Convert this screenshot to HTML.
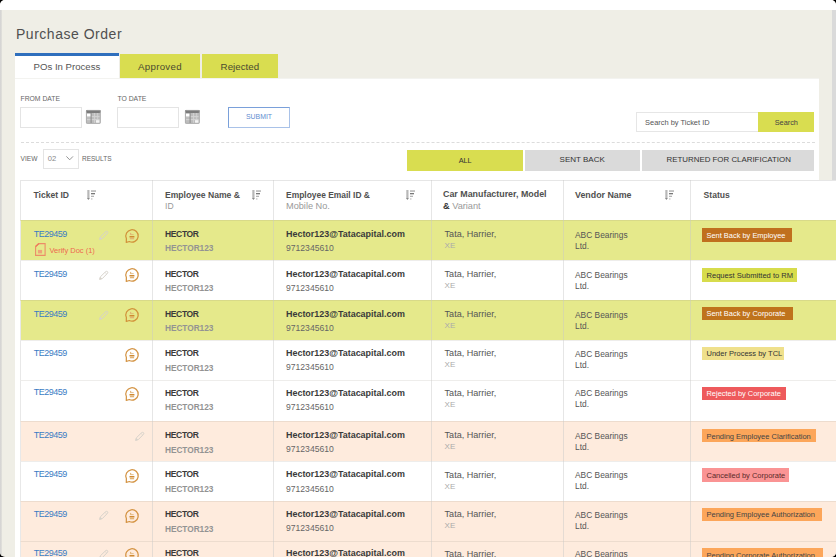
<!DOCTYPE html>
<html><head><meta charset="utf-8">
<style>
html,body{margin:0;padding:0;}
body{width:836px;height:557px;overflow:hidden;background:#000;position:relative;font-family:"Liberation Sans",sans-serif;}
#win{position:absolute;left:0;top:0;width:836px;height:557px;border-radius:5px;overflow:hidden;background:#efeee6;}
.t{position:absolute;white-space:nowrap;line-height:1;}
.b{position:absolute;box-sizing:border-box;}
svg{position:absolute;overflow:visible;}
</style></head><body><div id="win">
<div class="b" style="left:0px;top:0px;width:836px;height:10px;background:#fff;"></div>
<div class="b" style="left:0px;top:10px;width:2px;height:547px;background:linear-gradient(90deg,#d2d2d2,#e2e1dc);"></div>
<div class="b" style="left:832px;top:10px;width:4px;height:547px;background:#dadada;"></div>
<div class="t" style="left:16px;top:27.15px;font-size:14px;color:#505050;font-weight:400;letter-spacing:0.52px;">Purchase Order</div>
<div class="b" style="left:15px;top:53px;width:104px;height:25px;background:#fff;border-top:3px solid #2f6fbd;"></div>
<div class="b" style="left:120px;top:54px;width:80px;height:24px;background:#d9dd50;"></div>
<div class="b" style="left:202px;top:54px;width:76px;height:24px;background:#d9dd50;"></div>
<div class="t" style="left:33.6px;top:61.87px;font-size:9.6px;color:#555;font-weight:400;">POs In Process</div>
<div class="t" style="left:138px;top:61.69px;font-size:9.7px;color:#4a4a30;font-weight:400;letter-spacing:0.3px;">Approved</div>
<div class="t" style="left:220.6px;top:61.69px;font-size:9.7px;color:#4a4a30;font-weight:400;letter-spacing:0.05px;">Rejected</div>
<div class="b" style="left:15px;top:78px;width:804px;height:479px;background:#fff;border-top:1px solid #f3f3f0;"></div>
<div class="t" style="left:20.5px;top:95.94px;font-size:6.8px;color:#666;font-weight:400;">FROM DATE</div>
<div class="t" style="left:117.4px;top:95.90px;font-size:6.85px;color:#666;font-weight:400;">TO DATE</div>
<div class="b" style="left:20px;top:107px;width:62px;height:21px;border:1px solid #e4e4e4;"></div>
<div class="b" style="left:117px;top:107px;width:62px;height:21px;border:1px solid #e4e4e4;"></div>
<svg style="left:86px;top:110px" width="15" height="14" viewBox="0 0 15 14"><rect x="0" y="0" width="14.7" height="13.8" rx="1" fill="#bdbdbd"/><rect x="0" y="0" width="14.7" height="3" rx="1" fill="#7c7c7c"/><rect x="1" y="6.3" width="12.7" height="0.8" fill="#dcdcdc"/><rect x="1" y="9.3" width="12.7" height="0.8" fill="#dcdcdc"/><rect x="8" y="3" width="0.8" height="10" fill="#d5d5d5"/><rect x="11.3" y="3" width="0.8" height="10" fill="#d5d5d5"/><rect x="4.6" y="3" width="1" height="10" fill="#8a8a8a"/><rect x="1" y="3.8" width="3.4" height="2.4" fill="#fff"/><rect x="10" y="10.2" width="3.6" height="2.6" fill="#f4f4f4"/><rect x="0.4" y="0.4" width="13.9" height="13" rx="1" fill="none" stroke="#a9a9a9" stroke-width="0.8"/></svg>
<svg style="left:185px;top:110px" width="15" height="14" viewBox="0 0 15 14"><rect x="0" y="0" width="14.7" height="13.8" rx="1" fill="#bdbdbd"/><rect x="0" y="0" width="14.7" height="3" rx="1" fill="#7c7c7c"/><rect x="1" y="6.3" width="12.7" height="0.8" fill="#dcdcdc"/><rect x="1" y="9.3" width="12.7" height="0.8" fill="#dcdcdc"/><rect x="8" y="3" width="0.8" height="10" fill="#d5d5d5"/><rect x="11.3" y="3" width="0.8" height="10" fill="#d5d5d5"/><rect x="4.6" y="3" width="1" height="10" fill="#8a8a8a"/><rect x="1" y="3.8" width="3.4" height="2.4" fill="#fff"/><rect x="10" y="10.2" width="3.6" height="2.6" fill="#f4f4f4"/><rect x="0.4" y="0.4" width="13.9" height="13" rx="1" fill="none" stroke="#a9a9a9" stroke-width="0.8"/></svg>
<div class="b" style="left:228px;top:107px;width:62px;height:21px;border:1px solid #a9c2e8;border-top:1.6px solid #7aa0da;border-left:1.6px solid #7aa0da;"></div>
<div class="t" style="left:246px;top:114.46px;font-size:6.9px;color:#5f8dd0;font-weight:400;">SUBMIT</div>
<div class="b" style="left:21px;top:142px;width:794px;height:1px;border-top:1px dashed #dcdcdc;"></div>
<div class="b" style="left:636px;top:112px;width:122px;height:20px;border:1px solid #e6e6e6;border-right:none;"></div>
<div class="b" style="left:758px;top:112px;width:56px;height:20px;background:#d9dd50;"></div>
<div class="t" style="left:645.1px;top:119.09px;font-size:7.45px;color:#555;font-weight:400;">Search by Ticket ID</div>
<div class="t" style="left:774.7px;top:118.78px;font-size:7.35px;color:#444;font-weight:400;">Search</div>
<div class="t" style="left:20.5px;top:155.91px;font-size:6.6px;color:#666;font-weight:400;">VIEW</div>
<div class="b" style="left:43px;top:149px;width:36px;height:19.5px;border:1px solid #e4e4e4;"></div>
<div class="t" style="left:47.8px;top:155.17px;font-size:7.6px;color:#888;font-weight:400;letter-spacing:-0.1px;">02</div>
<svg style="left:66.2px;top:156.2px" width="8" height="5" viewBox="0 0 8 5"><path d="M0.4 0.4 L3.7 3.8 L7 0.4" fill="none" stroke="#888" stroke-width="0.9"/></svg>
<div class="t" style="left:82px;top:155.50px;font-size:6.5px;color:#666;font-weight:400;">RESULTS</div>
<div class="b" style="left:407px;top:150px;width:116px;height:21px;background:#d9dd50;"></div>
<div class="b" style="left:525px;top:150px;width:115px;height:21px;background:#dadada;"></div>
<div class="b" style="left:642px;top:150px;width:172px;height:21px;background:#dadada;"></div>
<div class="t" style="left:458.7px;top:156.62px;font-size:7.3px;color:#333;font-weight:400;">ALL</div>
<div class="t" style="left:559.6px;top:156.03px;font-size:8px;color:#333;font-weight:400;">SENT BACK</div>
<div class="t" style="left:666.5px;top:156.11px;font-size:7.9px;color:#333;font-weight:400;">RETURNED FOR CLARIFICATION</div>
<div class="b" style="left:20px;top:180px;width:816px;height:40px;background:#fff;border-top:1px solid #e6e6e6;border-left:1px solid #e6e6e6;"></div>
<div class="b" style="left:20px;top:220px;width:816px;height:40px;background:#e5e98b;border-top:1px solid rgba(150,140,130,0.16);border-left:1px solid #e8e8e8;"></div>
<div class="b" style="left:20px;top:260px;width:816px;height:40px;background:#fff;border-top:1px solid rgba(150,140,130,0.16);border-left:1px solid #e8e8e8;"></div>
<div class="b" style="left:20px;top:300px;width:816px;height:40px;background:#e5e98b;border-top:1px solid rgba(150,140,130,0.16);border-left:1px solid #e8e8e8;"></div>
<div class="b" style="left:20px;top:340px;width:816px;height:40px;background:#fff;border-top:1px solid rgba(150,140,130,0.16);border-left:1px solid #e8e8e8;"></div>
<div class="b" style="left:20px;top:380px;width:816px;height:41px;background:#fff;border-top:1px solid rgba(150,140,130,0.16);border-left:1px solid #e8e8e8;"></div>
<div class="b" style="left:20px;top:421px;width:816px;height:40px;background:#feebdd;border-top:1px solid rgba(150,140,130,0.16);border-left:1px solid #e8e8e8;"></div>
<div class="b" style="left:20px;top:461px;width:816px;height:40px;background:#fff;border-top:1px solid rgba(150,140,130,0.16);border-left:1px solid #e8e8e8;"></div>
<div class="b" style="left:20px;top:501px;width:816px;height:40px;background:#feebdd;border-top:1px solid rgba(150,140,130,0.16);border-left:1px solid #e8e8e8;"></div>
<div class="b" style="left:20px;top:541px;width:816px;height:40px;background:#feebdd;border-top:1px solid rgba(150,140,130,0.16);border-left:1px solid #e8e8e8;"></div>
<div class="b" style="left:152px;top:180px;width:1px;height:377px;background:rgba(200,200,200,0.45);"></div>
<div class="b" style="left:273px;top:180px;width:1px;height:377px;background:rgba(200,200,200,0.45);"></div>
<div class="b" style="left:431px;top:180px;width:1px;height:377px;background:rgba(200,200,200,0.45);"></div>
<div class="b" style="left:563px;top:180px;width:1px;height:377px;background:rgba(200,200,200,0.45);"></div>
<div class="b" style="left:690px;top:180px;width:1px;height:377px;background:rgba(200,200,200,0.45);"></div>
<div class="t" style="left:33.5px;top:190.76px;font-size:8.55px;color:#505050;font-weight:700;">Ticket ID</div>
<svg style="left:87px;top:190px" width="10" height="11" viewBox="0 0 10 11"><rect x="0.3" y="0" width="2.2" height="8.5" fill="#b8b8b8"/><path d="M0 8 L1.4 10 L2.8 8 Z" fill="#8a8a8a"/><rect x="4" y="0.4" width="5" height="1.3" fill="#a8a8a8"/><rect x="4" y="3.1" width="4" height="1.2" fill="#6a6a6a"/><rect x="4" y="5.7" width="3" height="1.3" fill="#b5b5b5"/><rect x="4" y="8.3" width="1.5" height="1.3" fill="#c5c5c5"/></svg>
<div class="t" style="left:165px;top:190.72px;font-size:8.6px;color:#505050;font-weight:700;">Employee Name &amp;</div>
<div class="t" style="left:165px;top:202.22px;font-size:8.6px;color:#999;font-weight:400;">ID</div>
<svg style="left:252px;top:190px" width="10" height="11" viewBox="0 0 10 11"><rect x="0.3" y="0" width="2.2" height="8.5" fill="#b8b8b8"/><path d="M0 8 L1.4 10 L2.8 8 Z" fill="#8a8a8a"/><rect x="4" y="0.4" width="5" height="1.3" fill="#a8a8a8"/><rect x="4" y="3.1" width="4" height="1.2" fill="#6a6a6a"/><rect x="4" y="5.7" width="3" height="1.3" fill="#b5b5b5"/><rect x="4" y="8.3" width="1.5" height="1.3" fill="#c5c5c5"/></svg>
<div class="t" style="left:286px;top:190.85px;font-size:8.45px;color:#505050;font-weight:700;">Employee Email ID &amp;</div>
<div class="t" style="left:286px;top:201.51px;font-size:9.2px;color:#999;font-weight:400;">Mobile No.</div>
<svg style="left:406px;top:190px" width="10" height="11" viewBox="0 0 10 11"><rect x="0.3" y="0" width="2.2" height="8.5" fill="#b8b8b8"/><path d="M0 8 L1.4 10 L2.8 8 Z" fill="#8a8a8a"/><rect x="4" y="0.4" width="5" height="1.3" fill="#a8a8a8"/><rect x="4" y="3.1" width="4" height="1.2" fill="#6a6a6a"/><rect x="4" y="5.7" width="3" height="1.3" fill="#b5b5b5"/><rect x="4" y="8.3" width="1.5" height="1.3" fill="#c5c5c5"/></svg>
<div class="t" style="left:443px;top:190.47px;font-size:8.9px;color:#505050;font-weight:700;">Car Manufacturer, Model</div>
<div class="t" style="left:443px;top:201.51px;font-size:9.2px;color:#333;font-weight:700;">&amp; <span style="color:#999;font-weight:400">Variant</span></div>
<div class="t" style="left:575px;top:190.50px;font-size:8.86px;color:#505050;font-weight:700;">Vendor Name</div>
<svg style="left:665px;top:190px" width="10" height="11" viewBox="0 0 10 11"><rect x="0.3" y="0" width="2.2" height="8.5" fill="#b8b8b8"/><path d="M0 8 L1.4 10 L2.8 8 Z" fill="#8a8a8a"/><rect x="4" y="0.4" width="5" height="1.3" fill="#a8a8a8"/><rect x="4" y="3.1" width="4" height="1.2" fill="#6a6a6a"/><rect x="4" y="5.7" width="3" height="1.3" fill="#b5b5b5"/><rect x="4" y="8.3" width="1.5" height="1.3" fill="#c5c5c5"/></svg>
<div class="t" style="left:703.6px;top:190.72px;font-size:8.6px;color:#505050;font-weight:700;">Status</div>
<div class="t" style="left:33.8px;top:229.68px;font-size:9px;color:#3a7cc4;font-weight:400;letter-spacing:-0.5px;">TE29459</div>
<svg style="left:35px;top:243.3px" width="11" height="13" viewBox="0 0 11 13"><path d="M0.6 3.6 L3.9 0.6 H10.1 V12.4 H0.6 Z" fill="none" stroke="#ec8c68" stroke-width="1.1"/><path d="M0.6 3.6 L3.9 0.6" stroke="#ee7a5a" stroke-width="1.4"/><rect x="2.9" y="6.9" width="4.2" height="3.5" fill="#eea478"/></svg>
<div class="t" style="left:49.4px;top:246.65px;font-size:7.5px;color:#ee6a50;font-weight:400;">Verify Doc (1)</div>
<svg style="left:99px;top:229.6px" width="10" height="10" viewBox="0 0 10 10"><path d="M0.6 9.4 L1.3 6.9 L6.5 1.8 Q7.5 0.9 8.5 1.7 Q9.2 2.6 8.3 3.5 L3.2 8.7 Z" fill="none" stroke="#d4d0c8" stroke-width="0.95"/><path d="M0.6 9.4 L1.3 6.9 L3.2 8.7 Z" fill="#d8d4cc"/><path d="M6.0 2.4 L7.8 4.1" stroke="#d8d4cc" stroke-width="0.7"/></svg>
<svg style="left:123.8px;top:227.79999999999998px" width="16" height="16" viewBox="0 0 16 16"><path d="M2.38 10.52 L2.3 14.4 L5.38 13.52 A6.2 6.2 0 1 0 2.38 10.52 Z" fill="none" stroke="#cf8a32" stroke-width="1.25" stroke-linejoin="round" opacity="0.9"/><rect x="6.1" y="4.9" width="1.1" height="1.6" fill="#dfb070"/><rect x="6.1" y="6.3" width="3.6" height="0.8" fill="#dfb070"/><rect x="5.5" y="8.0" width="4.9" height="1.5" fill="#cf8a32"/><rect x="5.9" y="10.0" width="4.2" height="1.3" fill="#e2b474"/></svg>
<div class="t" style="left:165px;top:229.80px;font-size:8.5px;color:#3a3a3a;font-weight:700;letter-spacing:-0.35px;">HECTOR</div>
<div class="t" style="left:165px;top:244.37px;font-size:8.3px;color:#939393;font-weight:700;letter-spacing:-0.05px;">HECTOR123</div>
<div class="t" style="left:286px;top:229.82px;font-size:8.95px;color:#3a3a3a;font-weight:700;">Hector123@Tatacapital.com</div>
<div class="t" style="left:286px;top:244.02px;font-size:8.6px;color:#666;font-weight:400;">9712345610</div>
<div class="t" style="left:444.6px;top:230.14px;font-size:9.05px;color:#555;font-weight:400;">Tata, Harrier,</div>
<div class="t" style="left:444.6px;top:242.03px;font-size:8px;color:#aaa;font-weight:400;">XE</div>
<div class="t" style="left:575px;top:230.69px;font-size:8.4px;color:#555;font-weight:400;">ABC Bearings</div>
<div class="t" style="left:575px;top:241.69px;font-size:8.4px;color:#555;font-weight:400;">Ltd.</div>
<div class="b" style="left:702px;top:228.2px;width:89.5px;height:13.400000000000006px;background:#c0701e;"></div>
<div class="t" style="left:706.5px;top:231.69px;font-size:7.45px;color:#fff;font-weight:400;">Sent Back by Employee</div>
<div class="t" style="left:33.8px;top:269.68px;font-size:9px;color:#3a7cc4;font-weight:400;letter-spacing:-0.5px;">TE29459</div>
<svg style="left:99px;top:269.6px" width="10" height="10" viewBox="0 0 10 10"><path d="M0.6 9.4 L1.3 6.9 L6.5 1.8 Q7.5 0.9 8.5 1.7 Q9.2 2.6 8.3 3.5 L3.2 8.7 Z" fill="none" stroke="#d4d0c8" stroke-width="0.95"/><path d="M0.6 9.4 L1.3 6.9 L3.2 8.7 Z" fill="#d8d4cc"/><path d="M6.0 2.4 L7.8 4.1" stroke="#d8d4cc" stroke-width="0.7"/></svg>
<svg style="left:123.8px;top:267.2px" width="16" height="16" viewBox="0 0 16 16"><path d="M2.38 10.52 L2.3 14.4 L5.38 13.52 A6.2 6.2 0 1 0 2.38 10.52 Z" fill="none" stroke="#cf8a32" stroke-width="1.25" stroke-linejoin="round" opacity="0.9"/><rect x="6.1" y="4.9" width="1.1" height="1.6" fill="#dfb070"/><rect x="6.1" y="6.3" width="3.6" height="0.8" fill="#dfb070"/><rect x="5.5" y="8.0" width="4.9" height="1.5" fill="#cf8a32"/><rect x="5.9" y="10.0" width="4.2" height="1.3" fill="#e2b474"/></svg>
<div class="t" style="left:165px;top:269.80px;font-size:8.5px;color:#3a3a3a;font-weight:700;letter-spacing:-0.35px;">HECTOR</div>
<div class="t" style="left:165px;top:284.37px;font-size:8.3px;color:#939393;font-weight:700;letter-spacing:-0.05px;">HECTOR123</div>
<div class="t" style="left:286px;top:269.82px;font-size:8.95px;color:#3a3a3a;font-weight:700;">Hector123@Tatacapital.com</div>
<div class="t" style="left:286px;top:284.02px;font-size:8.6px;color:#666;font-weight:400;">9712345610</div>
<div class="t" style="left:444.6px;top:270.14px;font-size:9.05px;color:#555;font-weight:400;">Tata, Harrier,</div>
<div class="t" style="left:444.6px;top:282.03px;font-size:8px;color:#aaa;font-weight:400;">XE</div>
<div class="t" style="left:575px;top:270.69px;font-size:8.4px;color:#555;font-weight:400;">ABC Bearings</div>
<div class="t" style="left:575px;top:281.69px;font-size:8.4px;color:#555;font-weight:400;">Ltd.</div>
<div class="b" style="left:702px;top:268.4px;width:95px;height:13.399999999999977px;background:#d7dc4c;"></div>
<div class="t" style="left:706.5px;top:271.79px;font-size:7.57px;color:#333;font-weight:400;">Request Submitted to RM</div>
<div class="t" style="left:33.8px;top:309.68px;font-size:9px;color:#3a7cc4;font-weight:400;letter-spacing:-0.5px;">TE29459</div>
<svg style="left:99px;top:309.6px" width="10" height="10" viewBox="0 0 10 10"><path d="M0.6 9.4 L1.3 6.9 L6.5 1.8 Q7.5 0.9 8.5 1.7 Q9.2 2.6 8.3 3.5 L3.2 8.7 Z" fill="none" stroke="#d4d0c8" stroke-width="0.95"/><path d="M0.6 9.4 L1.3 6.9 L3.2 8.7 Z" fill="#d8d4cc"/><path d="M6.0 2.4 L7.8 4.1" stroke="#d8d4cc" stroke-width="0.7"/></svg>
<svg style="left:123.8px;top:307.2px" width="16" height="16" viewBox="0 0 16 16"><path d="M2.38 10.52 L2.3 14.4 L5.38 13.52 A6.2 6.2 0 1 0 2.38 10.52 Z" fill="none" stroke="#cf8a32" stroke-width="1.25" stroke-linejoin="round" opacity="0.9"/><rect x="6.1" y="4.9" width="1.1" height="1.6" fill="#dfb070"/><rect x="6.1" y="6.3" width="3.6" height="0.8" fill="#dfb070"/><rect x="5.5" y="8.0" width="4.9" height="1.5" fill="#cf8a32"/><rect x="5.9" y="10.0" width="4.2" height="1.3" fill="#e2b474"/></svg>
<div class="t" style="left:165px;top:309.80px;font-size:8.5px;color:#3a3a3a;font-weight:700;letter-spacing:-0.35px;">HECTOR</div>
<div class="t" style="left:165px;top:324.37px;font-size:8.3px;color:#939393;font-weight:700;letter-spacing:-0.05px;">HECTOR123</div>
<div class="t" style="left:286px;top:309.82px;font-size:8.95px;color:#3a3a3a;font-weight:700;">Hector123@Tatacapital.com</div>
<div class="t" style="left:286px;top:324.02px;font-size:8.6px;color:#666;font-weight:400;">9712345610</div>
<div class="t" style="left:444.6px;top:310.14px;font-size:9.05px;color:#555;font-weight:400;">Tata, Harrier,</div>
<div class="t" style="left:444.6px;top:322.03px;font-size:8px;color:#aaa;font-weight:400;">XE</div>
<div class="t" style="left:575px;top:310.69px;font-size:8.4px;color:#555;font-weight:400;">ABC Bearings</div>
<div class="t" style="left:575px;top:321.69px;font-size:8.4px;color:#555;font-weight:400;">Ltd.</div>
<div class="b" style="left:702px;top:306.8px;width:90.5px;height:13.399999999999977px;background:#bf731c;"></div>
<div class="t" style="left:706.5px;top:310.29px;font-size:7.45px;color:#fff;font-weight:400;">Sent Back by Corporate</div>
<div class="t" style="left:33.8px;top:348.98px;font-size:9px;color:#3a7cc4;font-weight:400;letter-spacing:-0.5px;">TE29459</div>
<svg style="left:123.8px;top:346.5px" width="16" height="16" viewBox="0 0 16 16"><path d="M2.38 10.52 L2.3 14.4 L5.38 13.52 A6.2 6.2 0 1 0 2.38 10.52 Z" fill="none" stroke="#cf8a32" stroke-width="1.25" stroke-linejoin="round" opacity="0.9"/><rect x="6.1" y="4.9" width="1.1" height="1.6" fill="#dfb070"/><rect x="6.1" y="6.3" width="3.6" height="0.8" fill="#dfb070"/><rect x="5.5" y="8.0" width="4.9" height="1.5" fill="#cf8a32"/><rect x="5.9" y="10.0" width="4.2" height="1.3" fill="#e2b474"/></svg>
<div class="t" style="left:165px;top:349.10px;font-size:8.5px;color:#3a3a3a;font-weight:700;letter-spacing:-0.35px;">HECTOR</div>
<div class="t" style="left:165px;top:363.67px;font-size:8.3px;color:#939393;font-weight:700;letter-spacing:-0.05px;">HECTOR123</div>
<div class="t" style="left:286px;top:349.12px;font-size:8.95px;color:#3a3a3a;font-weight:700;">Hector123@Tatacapital.com</div>
<div class="t" style="left:286px;top:363.32px;font-size:8.6px;color:#666;font-weight:400;">9712345610</div>
<div class="t" style="left:444.6px;top:349.44px;font-size:9.05px;color:#555;font-weight:400;">Tata, Harrier,</div>
<div class="t" style="left:444.6px;top:361.33px;font-size:8px;color:#aaa;font-weight:400;">XE</div>
<div class="t" style="left:575px;top:349.99px;font-size:8.4px;color:#555;font-weight:400;">ABC Bearings</div>
<div class="t" style="left:575px;top:360.99px;font-size:8.4px;color:#555;font-weight:400;">Ltd.</div>
<div class="b" style="left:702px;top:346.9px;width:82px;height:13.399999999999977px;background:#efe08c;"></div>
<div class="t" style="left:706.5px;top:350.35px;font-size:7.5px;color:#333;font-weight:400;">Under Process by TCL</div>
<div class="t" style="left:33.8px;top:388.48px;font-size:9px;color:#3a7cc4;font-weight:400;letter-spacing:-0.5px;">TE29459</div>
<svg style="left:123.8px;top:386.0px" width="16" height="16" viewBox="0 0 16 16"><path d="M2.38 10.52 L2.3 14.4 L5.38 13.52 A6.2 6.2 0 1 0 2.38 10.52 Z" fill="none" stroke="#cf8a32" stroke-width="1.25" stroke-linejoin="round" opacity="0.9"/><rect x="6.1" y="4.9" width="1.1" height="1.6" fill="#dfb070"/><rect x="6.1" y="6.3" width="3.6" height="0.8" fill="#dfb070"/><rect x="5.5" y="8.0" width="4.9" height="1.5" fill="#cf8a32"/><rect x="5.9" y="10.0" width="4.2" height="1.3" fill="#e2b474"/></svg>
<div class="t" style="left:165px;top:388.60px;font-size:8.5px;color:#3a3a3a;font-weight:700;letter-spacing:-0.35px;">HECTOR</div>
<div class="t" style="left:165px;top:403.17px;font-size:8.3px;color:#939393;font-weight:700;letter-spacing:-0.05px;">HECTOR123</div>
<div class="t" style="left:286px;top:388.62px;font-size:8.95px;color:#3a3a3a;font-weight:700;">Hector123@Tatacapital.com</div>
<div class="t" style="left:286px;top:402.82px;font-size:8.6px;color:#666;font-weight:400;">9712345610</div>
<div class="t" style="left:444.6px;top:388.94px;font-size:9.05px;color:#555;font-weight:400;">Tata, Harrier,</div>
<div class="t" style="left:444.6px;top:400.83px;font-size:8px;color:#aaa;font-weight:400;">XE</div>
<div class="t" style="left:575px;top:389.49px;font-size:8.4px;color:#555;font-weight:400;">ABC Bearings</div>
<div class="t" style="left:575px;top:400.49px;font-size:8.4px;color:#555;font-weight:400;">Ltd.</div>
<div class="b" style="left:702px;top:386.6px;width:84px;height:13.399999999999977px;background:#ee5a5c;"></div>
<div class="t" style="left:706.5px;top:390.09px;font-size:7.45px;color:#fff;font-weight:400;">Rejected by Corporate</div>
<div class="t" style="left:33.8px;top:430.98px;font-size:9px;color:#3a7cc4;font-weight:400;letter-spacing:-0.5px;">TE29459</div>
<svg style="left:135px;top:430.90000000000003px" width="10" height="10" viewBox="0 0 10 10"><path d="M0.6 9.4 L1.3 6.9 L6.5 1.8 Q7.5 0.9 8.5 1.7 Q9.2 2.6 8.3 3.5 L3.2 8.7 Z" fill="none" stroke="#d4d0c8" stroke-width="0.95"/><path d="M0.6 9.4 L1.3 6.9 L3.2 8.7 Z" fill="#d8d4cc"/><path d="M6.0 2.4 L7.8 4.1" stroke="#d8d4cc" stroke-width="0.7"/></svg>
<div class="t" style="left:165px;top:431.10px;font-size:8.5px;color:#3a3a3a;font-weight:700;letter-spacing:-0.35px;">HECTOR</div>
<div class="t" style="left:165px;top:445.67px;font-size:8.3px;color:#939393;font-weight:700;letter-spacing:-0.05px;">HECTOR123</div>
<div class="t" style="left:286px;top:431.12px;font-size:8.95px;color:#3a3a3a;font-weight:700;">Hector123@Tatacapital.com</div>
<div class="t" style="left:286px;top:445.32px;font-size:8.6px;color:#666;font-weight:400;">9712345610</div>
<div class="t" style="left:444.6px;top:431.44px;font-size:9.05px;color:#555;font-weight:400;">Tata, Harrier,</div>
<div class="t" style="left:444.6px;top:443.33px;font-size:8px;color:#aaa;font-weight:400;">XE</div>
<div class="t" style="left:575px;top:431.99px;font-size:8.4px;color:#555;font-weight:400;">ABC Bearings</div>
<div class="t" style="left:575px;top:442.99px;font-size:8.4px;color:#555;font-weight:400;">Ltd.</div>
<div class="b" style="left:702px;top:429.1px;width:113.5px;height:13.399999999999977px;background:#fca65a;"></div>
<div class="t" style="left:706.5px;top:432.55px;font-size:7.5px;color:#444;font-weight:400;">Pending Employee Clarification</div>
<div class="t" style="left:33.8px;top:470.28px;font-size:9px;color:#3a7cc4;font-weight:400;letter-spacing:-0.5px;">TE29459</div>
<svg style="left:123.8px;top:467.8px" width="16" height="16" viewBox="0 0 16 16"><path d="M2.38 10.52 L2.3 14.4 L5.38 13.52 A6.2 6.2 0 1 0 2.38 10.52 Z" fill="none" stroke="#cf8a32" stroke-width="1.25" stroke-linejoin="round" opacity="0.9"/><rect x="6.1" y="4.9" width="1.1" height="1.6" fill="#dfb070"/><rect x="6.1" y="6.3" width="3.6" height="0.8" fill="#dfb070"/><rect x="5.5" y="8.0" width="4.9" height="1.5" fill="#cf8a32"/><rect x="5.9" y="10.0" width="4.2" height="1.3" fill="#e2b474"/></svg>
<div class="t" style="left:165px;top:470.40px;font-size:8.5px;color:#3a3a3a;font-weight:700;letter-spacing:-0.35px;">HECTOR</div>
<div class="t" style="left:165px;top:484.97px;font-size:8.3px;color:#939393;font-weight:700;letter-spacing:-0.05px;">HECTOR123</div>
<div class="t" style="left:286px;top:470.42px;font-size:8.95px;color:#3a3a3a;font-weight:700;">Hector123@Tatacapital.com</div>
<div class="t" style="left:286px;top:484.62px;font-size:8.6px;color:#666;font-weight:400;">9712345610</div>
<div class="t" style="left:444.6px;top:470.74px;font-size:9.05px;color:#555;font-weight:400;">Tata, Harrier,</div>
<div class="t" style="left:444.6px;top:482.63px;font-size:8px;color:#aaa;font-weight:400;">XE</div>
<div class="t" style="left:575px;top:471.29px;font-size:8.4px;color:#555;font-weight:400;">ABC Bearings</div>
<div class="t" style="left:575px;top:482.29px;font-size:8.4px;color:#555;font-weight:400;">Ltd.</div>
<div class="b" style="left:702px;top:468.3px;width:87px;height:13.399999999999977px;background:#fa9494;"></div>
<div class="t" style="left:706.5px;top:471.75px;font-size:7.5px;color:#5a2a2a;font-weight:400;">Cancelled by Corporate</div>
<div class="t" style="left:33.8px;top:509.98px;font-size:9px;color:#3a7cc4;font-weight:400;letter-spacing:-0.5px;">TE29459</div>
<svg style="left:99px;top:509.90000000000003px" width="10" height="10" viewBox="0 0 10 10"><path d="M0.6 9.4 L1.3 6.9 L6.5 1.8 Q7.5 0.9 8.5 1.7 Q9.2 2.6 8.3 3.5 L3.2 8.7 Z" fill="none" stroke="#d4d0c8" stroke-width="0.95"/><path d="M0.6 9.4 L1.3 6.9 L3.2 8.7 Z" fill="#d8d4cc"/><path d="M6.0 2.4 L7.8 4.1" stroke="#d8d4cc" stroke-width="0.7"/></svg>
<svg style="left:123.8px;top:507.5px" width="16" height="16" viewBox="0 0 16 16"><path d="M2.38 10.52 L2.3 14.4 L5.38 13.52 A6.2 6.2 0 1 0 2.38 10.52 Z" fill="none" stroke="#cf8a32" stroke-width="1.25" stroke-linejoin="round" opacity="0.9"/><rect x="6.1" y="4.9" width="1.1" height="1.6" fill="#dfb070"/><rect x="6.1" y="6.3" width="3.6" height="0.8" fill="#dfb070"/><rect x="5.5" y="8.0" width="4.9" height="1.5" fill="#cf8a32"/><rect x="5.9" y="10.0" width="4.2" height="1.3" fill="#e2b474"/></svg>
<div class="t" style="left:165px;top:510.10px;font-size:8.5px;color:#3a3a3a;font-weight:700;letter-spacing:-0.35px;">HECTOR</div>
<div class="t" style="left:165px;top:524.67px;font-size:8.3px;color:#939393;font-weight:700;letter-spacing:-0.05px;">HECTOR123</div>
<div class="t" style="left:286px;top:510.12px;font-size:8.95px;color:#3a3a3a;font-weight:700;">Hector123@Tatacapital.com</div>
<div class="t" style="left:286px;top:524.32px;font-size:8.6px;color:#666;font-weight:400;">9712345610</div>
<div class="t" style="left:444.6px;top:510.44px;font-size:9.05px;color:#555;font-weight:400;">Tata, Harrier,</div>
<div class="t" style="left:444.6px;top:522.33px;font-size:8px;color:#aaa;font-weight:400;">XE</div>
<div class="t" style="left:575px;top:510.99px;font-size:8.4px;color:#555;font-weight:400;">ABC Bearings</div>
<div class="t" style="left:575px;top:521.99px;font-size:8.4px;color:#555;font-weight:400;">Ltd.</div>
<div class="b" style="left:702px;top:508.0px;width:119.5px;height:13.399999999999977px;background:#fca65a;"></div>
<div class="t" style="left:706.5px;top:511.45px;font-size:7.5px;color:#444;font-weight:400;">Pending Employee Authorization</div>
<div class="t" style="left:33.8px;top:549.18px;font-size:9px;color:#3a7cc4;font-weight:400;letter-spacing:-0.5px;">TE29459</div>
<svg style="left:99px;top:549.1px" width="10" height="10" viewBox="0 0 10 10"><path d="M0.6 9.4 L1.3 6.9 L6.5 1.8 Q7.5 0.9 8.5 1.7 Q9.2 2.6 8.3 3.5 L3.2 8.7 Z" fill="none" stroke="#d4d0c8" stroke-width="0.95"/><path d="M0.6 9.4 L1.3 6.9 L3.2 8.7 Z" fill="#d8d4cc"/><path d="M6.0 2.4 L7.8 4.1" stroke="#d8d4cc" stroke-width="0.7"/></svg>
<svg style="left:123.8px;top:546.7px" width="16" height="16" viewBox="0 0 16 16"><path d="M2.38 10.52 L2.3 14.4 L5.38 13.52 A6.2 6.2 0 1 0 2.38 10.52 Z" fill="none" stroke="#cf8a32" stroke-width="1.25" stroke-linejoin="round" opacity="0.9"/><rect x="6.1" y="4.9" width="1.1" height="1.6" fill="#dfb070"/><rect x="6.1" y="6.3" width="3.6" height="0.8" fill="#dfb070"/><rect x="5.5" y="8.0" width="4.9" height="1.5" fill="#cf8a32"/><rect x="5.9" y="10.0" width="4.2" height="1.3" fill="#e2b474"/></svg>
<div class="t" style="left:165px;top:549.30px;font-size:8.5px;color:#3a3a3a;font-weight:700;letter-spacing:-0.35px;">HECTOR</div>
<div class="t" style="left:165px;top:563.87px;font-size:8.3px;color:#939393;font-weight:700;letter-spacing:-0.05px;">HECTOR123</div>
<div class="t" style="left:286px;top:549.32px;font-size:8.95px;color:#3a3a3a;font-weight:700;">Hector123@Tatacapital.com</div>
<div class="t" style="left:286px;top:563.52px;font-size:8.6px;color:#666;font-weight:400;">9712345610</div>
<div class="t" style="left:444.6px;top:549.64px;font-size:9.05px;color:#555;font-weight:400;">Tata, Harrier,</div>
<div class="t" style="left:444.6px;top:561.53px;font-size:8px;color:#aaa;font-weight:400;">XE</div>
<div class="t" style="left:575px;top:550.19px;font-size:8.4px;color:#555;font-weight:400;">ABC Bearings</div>
<div class="t" style="left:575px;top:561.19px;font-size:8.4px;color:#555;font-weight:400;">Ltd.</div>
<div class="b" style="left:702px;top:548.2px;width:120.5px;height:13.399999999999977px;background:#fca65a;"></div>
<div class="t" style="left:706.5px;top:551.65px;font-size:7.5px;color:#444;font-weight:400;">Pending Corporate Authorization</div>
</div></body></html>
